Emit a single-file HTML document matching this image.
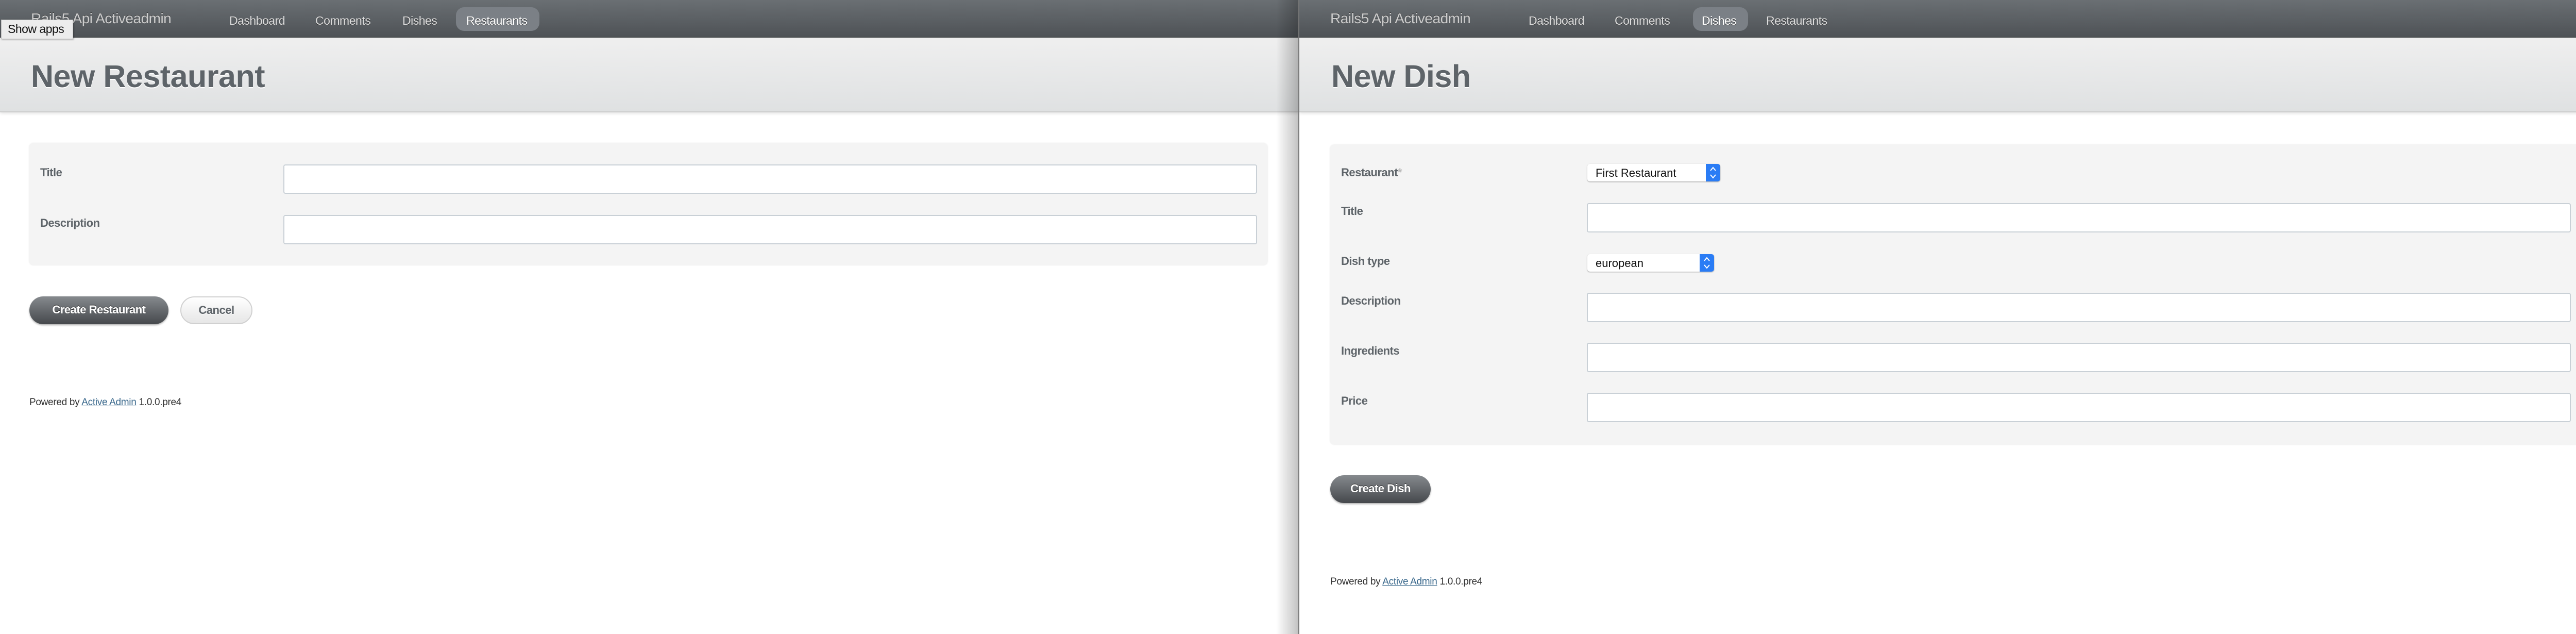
<!DOCTYPE html>
<html><head><meta charset="utf-8"><style>
*{margin:0;padding:0;box-sizing:border-box}
body{width:5062px;height:1230px;background:#fff;font-family:"Liberation Sans",Arial,sans-serif;position:relative;overflow:hidden}
.win{position:absolute;top:0;height:1230px;background:#fff;overflow:hidden}
.hdr{position:absolute;left:0;right:0;top:0;height:73px;background:linear-gradient(#6a6f73,#4e5256);border-bottom:1px solid #44484b}
.logo{position:absolute;top:20px;font-size:28px;color:#cdcdcd;text-shadow:0 -1px 0 #333;letter-spacing:-0.5px}
.nav{position:absolute;top:27px;font-size:23px;color:#ddd;text-shadow:0 1px 0 #222;letter-spacing:-0.5px}
.pill{position:absolute;top:14px;height:46px;border-radius:16px;background:#7b8086}
.tb{position:absolute;left:0;right:0;top:73px;height:145px;background:linear-gradient(#efefef,#dfe1e2);border-bottom:2px solid #cdcdcd;box-shadow:0 2px 6px rgba(0,0,0,.12)}
.tb h2{position:absolute;top:40px;font-size:61px;font-weight:bold;color:#5e6469;text-shadow:0 2px 0 #fff;letter-spacing:-0.5px}
.panel{position:absolute;background:#f4f4f4;border-radius:8px;box-shadow:0 0 3px rgba(0,0,0,.12)}
.lbl{position:absolute;font-size:22px;font-weight:bold;color:#5e6469;letter-spacing:-0.5px}
.inp{position:absolute;height:57px;background:#fff;border:2px solid #c9d0d6;border-radius:4px}
.sel{position:absolute;height:34px;background:#fff;border-radius:5px;box-shadow:0 1px 2px rgba(0,0,0,.35);font-size:22px;color:#111;padding:5px 0 0 16px}
.sel svg{position:absolute;right:0;top:0}
.btn{position:absolute;height:54px;border-radius:27px;background:linear-gradient(#868a8e,#45484c);color:#fff;font-size:22px;font-weight:bold;text-align:center;line-height:52px;text-shadow:0 -1px 0 #222;box-shadow:0 2px 3px rgba(0,0,0,.3);letter-spacing:-0.5px}
.btn2{position:absolute;height:54px;border-radius:27px;background:linear-gradient(#fff,#e6e6e6);border:2px solid #d0d0d0;color:#5e6469;font-size:22px;font-weight:bold;text-align:center;line-height:50px;text-shadow:0 1px 0 #fff;letter-spacing:-0.5px}
.foot{position:absolute;font-size:19px;color:#333;letter-spacing:-0.3px}
.foot a{color:#38678b;text-decoration:underline}
</style></head><body>

<div class="win" style="left:0;width:2522px">
 <div class="hdr">
  <div class="logo" style="left:60px">Rails5 Api Activeadmin</div>
  <div class="nav" style="left:445px">Dashboard</div>
  <div class="nav" style="left:612px">Comments</div>
  <div class="nav" style="left:781px">Dishes</div>
  <div class="pill" style="left:885px;width:162px"></div>
  <div class="nav" style="left:905px;color:#fff">Restaurants</div>
 </div>
 <div class="tb"><h2 style="left:60px">New Restaurant</h2></div>
 <div class="panel" style="left:57px;top:278px;width:2403px;height:236px"></div>
 <div class="lbl" style="left:78px;top:322px">Title</div>
 <div class="inp" style="left:550px;top:319px;width:1890px"></div>
 <div class="lbl" style="left:78px;top:420px">Description</div>
 <div class="inp" style="left:550px;top:417px;width:1890px"></div>
 <div class="btn" style="left:57px;top:575px;width:270px">Create Restaurant</div>
 <div class="btn2" style="left:350px;top:575px;width:140px">Cancel</div>
 <div class="foot" style="left:57px;top:770px">Powered by <a>Active Admin</a> 1.0.0.pre4</div>
 <div style="position:absolute;left:2px;top:38px;width:140px;height:38px;background:#ececec;border:1px solid #bbb;box-shadow:1px 1px 3px rgba(0,0,0,.3);font-size:23px;color:#111;padding:4px 0 0 12px;letter-spacing:-0.5px">Show apps</div>
 <div style="position:absolute;right:0;top:0;width:45px;height:1230px;background:linear-gradient(90deg,rgba(0,0,0,0),rgba(0,0,0,.25))"></div>
</div>

<div class="win" style="left:2520px;width:2542px;border-left:2px solid #777">
 <div class="hdr">
  <div class="logo" style="left:60px">Rails5 Api Activeadmin</div>
  <div class="nav" style="left:445px">Dashboard</div>
  <div class="nav" style="left:612px">Comments</div>
  <div class="pill" style="left:764px;width:107px"></div>
  <div class="nav" style="left:781px;color:#fff">Dishes</div>
  <div class="nav" style="left:906px">Restaurants</div>
 </div>
 <div class="tb"><h2 style="left:62px">New Dish</h2></div>
 <div class="panel" style="left:60px;top:281px;width:2440px;height:581px"></div>
 <div class="lbl" style="left:81px;top:322px">Restaurant<span style="color:#bbb">*</span></div>
 <div class="sel" style="left:559px;top:318px;width:258px">First Restaurant<svg width="28" height="34" viewBox="0 0 28 34"><path d="M0 0H23a5 5 0 0 1 5 5V29a5 5 0 0 1-5 5H0z" fill="#2a7cf5"/><path d="M9 13l5-6 5 6M9 21l5 6 5-6" fill="none" stroke="#fff" stroke-width="2"/></svg></div>
 <div class="lbl" style="left:81px;top:397px">Title</div>
 <div class="inp" style="left:558px;top:394px;width:1910px"></div>
 <div class="lbl" style="left:81px;top:494px">Dish type</div>
 <div class="sel" style="left:559px;top:493px;width:246px">european<svg width="28" height="34" viewBox="0 0 28 34"><path d="M0 0H23a5 5 0 0 1 5 5V29a5 5 0 0 1-5 5H0z" fill="#2a7cf5"/><path d="M9 13l5-6 5 6M9 21l5 6 5-6" fill="none" stroke="#fff" stroke-width="2"/></svg></div>
 <div class="lbl" style="left:81px;top:571px">Description</div>
 <div class="inp" style="left:558px;top:568px;width:1910px"></div>
 <div class="lbl" style="left:81px;top:668px">Ingredients</div>
 <div class="inp" style="left:558px;top:665px;width:1910px"></div>
 <div class="lbl" style="left:81px;top:765px">Price</div>
 <div class="inp" style="left:558px;top:762px;width:1910px"></div>
 <div class="btn" style="left:60px;top:922px;width:195px">Create Dish</div>
 <div class="foot" style="left:60px;top:1118px">Powered by <a>Active Admin</a> 1.0.0.pre4</div>
</div>
</body></html>
